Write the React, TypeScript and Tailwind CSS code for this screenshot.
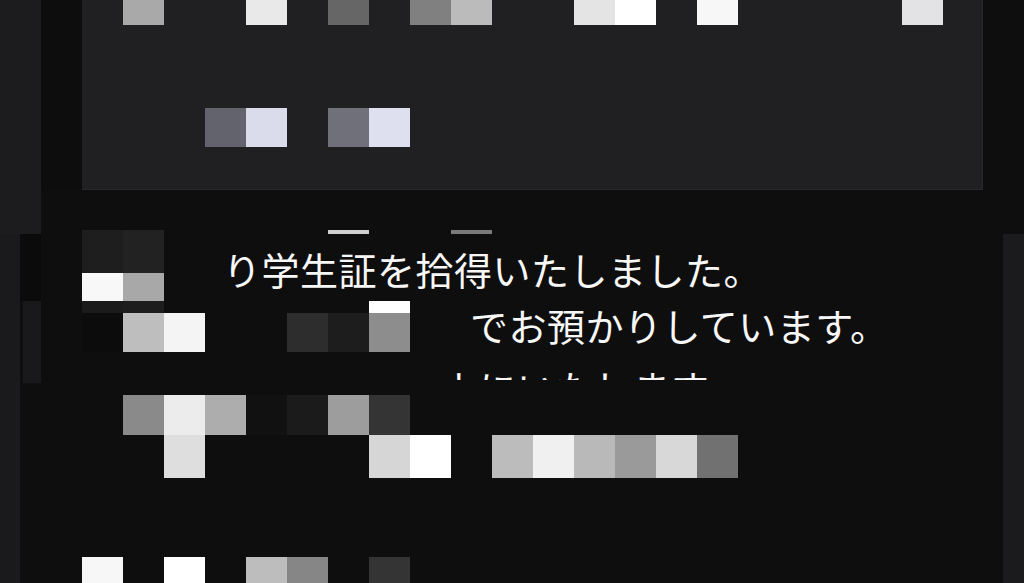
import React from "react";

type Cell = { i: number; c: string };
type Row = { top: string; h: string; cells: Cell[] };

const rows: Row[] = [
  {
    top: "top-0",
    h: "h-[25px]",
    cells: [
      { i: 3, c: "bg-[#a9a9aa]" },
      { i: 6, c: "bg-[#e9e9e9]" },
      { i: 8, c: "bg-[#666666]" },
      { i: 10, c: "bg-[#808080]" },
      { i: 11, c: "bg-[#bbbbbb]" },
      { i: 14, c: "bg-[#e4e4e4]" },
      { i: 15, c: "bg-[#ffffff]" },
      { i: 17, c: "bg-[#f7f7f7]" },
      { i: 22, c: "bg-[#e3e2e5]" },
    ],
  },
  {
    top: "top-[108px]",
    h: "h-[39px]",
    cells: [
      { i: 5, c: "bg-[#63636d]" },
      { i: 6, c: "bg-[#dadbeb]" },
      { i: 8, c: "bg-[#70707a]" },
      { i: 9, c: "bg-[#dedfef]" },
    ],
  },
  {
    top: "top-[230px]",
    h: "h-[4px]",
    cells: [
      { i: 8, c: "bg-[#d0d0d0]" },
      { i: 11, c: "bg-[#7a7a7a]" },
    ],
  },
  {
    top: "top-[230px]",
    h: "h-[43px]",
    cells: [
      { i: 2, c: "bg-[#1e1e1e]" },
      { i: 3, c: "bg-[#222222]" },
    ],
  },
  {
    top: "top-[273px]",
    h: "h-[28px]",
    cells: [
      { i: 2, c: "bg-[#f8f8f8]" },
      { i: 3, c: "bg-[#a8a8a8]" },
    ],
  },
  {
    top: "top-[301px]",
    h: "h-[12px]",
    cells: [
      { i: 2, c: "bg-[#1b1b1b]" },
      { i: 3, c: "bg-[#1d1d1d]" },
      { i: 9, c: "bg-[#ffffff]" },
    ],
  },
  {
    top: "top-[313px]",
    h: "h-[39px]",
    cells: [
      { i: 2, c: "bg-[#0c0c0c]" },
      { i: 3, c: "bg-[#bebebe]" },
      { i: 4, c: "bg-[#f4f4f4]" },
      { i: 7, c: "bg-[#2d2d2d]" },
      { i: 8, c: "bg-[#1d1d1d]" },
      { i: 9, c: "bg-[#8d8d8d]" },
    ],
  },
  {
    top: "top-[395px]",
    h: "h-[40px]",
    cells: [
      { i: 3, c: "bg-[#8a8a8a]" },
      { i: 4, c: "bg-[#ececec]" },
      { i: 5, c: "bg-[#adadad]" },
      { i: 6, c: "bg-[#111111]" },
      { i: 7, c: "bg-[#1b1b1b]" },
      { i: 8, c: "bg-[#9d9d9d]" },
      { i: 9, c: "bg-[#343434]" },
    ],
  },
  {
    top: "top-[435px]",
    h: "h-[43px]",
    cells: [
      { i: 4, c: "bg-[#dedede]" },
      { i: 9, c: "bg-[#d6d6d6]" },
      { i: 10, c: "bg-[#ffffff]" },
      { i: 12, c: "bg-[#bcbcbc]" },
      { i: 13, c: "bg-[#f0f0f0]" },
      { i: 14, c: "bg-[#b9b9b9]" },
      { i: 15, c: "bg-[#9a9a9a]" },
      { i: 16, c: "bg-[#d8d8d8]" },
      { i: 17, c: "bg-[#717171]" },
    ],
  },
  {
    top: "top-[557px]",
    h: "h-[26px]",
    cells: [
      { i: 2, c: "bg-[#f7f7f7]" },
      { i: 4, c: "bg-[#ffffff]" },
      { i: 6, c: "bg-[#bdbdbd]" },
      { i: 7, c: "bg-[#868686]" },
      { i: 9, c: "bg-[#343434]" },
    ],
  },
];

function MosaicRow({ row }: { row: Row }) {
  const max = Math.max(...row.cells.map((c) => c.i));
  const slots = Array.from({ length: max + 1 }, (_, i) => row.cells.find((c) => c.i === i));
  return (
    <div className={`absolute left-0 ${row.top} ${row.h} flex`}>
      {slots.map((s, i) => (
        <div key={i} className={`w-[41px] h-full shrink-0 ${s ? s.c : ""}`} />
      ))}
    </div>
  );
}

export default function App() {
  return (
    <div className="relative w-[1024px] h-[583px] overflow-hidden bg-[#0e0e0e] flex font-['Noto_Sans_CJK_JP','Noto_Sans',sans-serif]">
      {/* left rail */}
      <aside className="w-[41px] shrink-0 flex flex-col">
        <div className="h-[234px] bg-[#1c1c1e]" />
        <div className="flex-1 flex">
          <div className="w-[20px] bg-[#1a1a1c]" />
          <div className="flex-1 flex flex-col">
            <div className="h-[67px] bg-[#0b0b0b]" />
            <div className="h-[82px] flex">
              <div className="w-[3px]" />
              <div className="flex-1 bg-[#19191b]" />
            </div>
          </div>
        </div>
      </aside>

      {/* main */}
      <main className="flex-1 flex flex-col">
        <div className="h-[190px] flex">
          <div className="w-[41px] shrink-0 bg-[#0d0d0d]" />
          <section className="w-[901px] shrink-0 bg-[#202022] border-b border-r border-[#29292b]" />
        </div>
        <div className="flex-1 flex">
          <div className="w-[41px] shrink-0 bg-[#0e0e0e]" />
          <div className="flex-1 flex flex-col pt-[60px] text-[38px] leading-[38px] tracking-[0.5px] text-[#f7f7f7]">
            <p className="pl-[141px] whitespace-nowrap">り学生証を拾得いたしました。</p>
            <p className="pl-[388px] mt-[18px] whitespace-nowrap">でお預かりしています。</p>
            <div className="pl-[358px] mt-[24px] h-[12px] overflow-hidden">
              <p className="whitespace-nowrap">よにいたします</p>
            </div>
          </div>
          <div className="w-[21px] shrink-0 flex flex-col">
            <div className="h-[44px]" />
            <div className="flex-1 bg-[#1b1b1d]" />
          </div>
        </div>
      </main>

      {/* mosaic overlay */}
      <div className="absolute inset-0 pointer-events-none">
        {rows.map((r, k) => (
          <MosaicRow key={k} row={r} />
        ))}
      </div>
    </div>
  );
}
